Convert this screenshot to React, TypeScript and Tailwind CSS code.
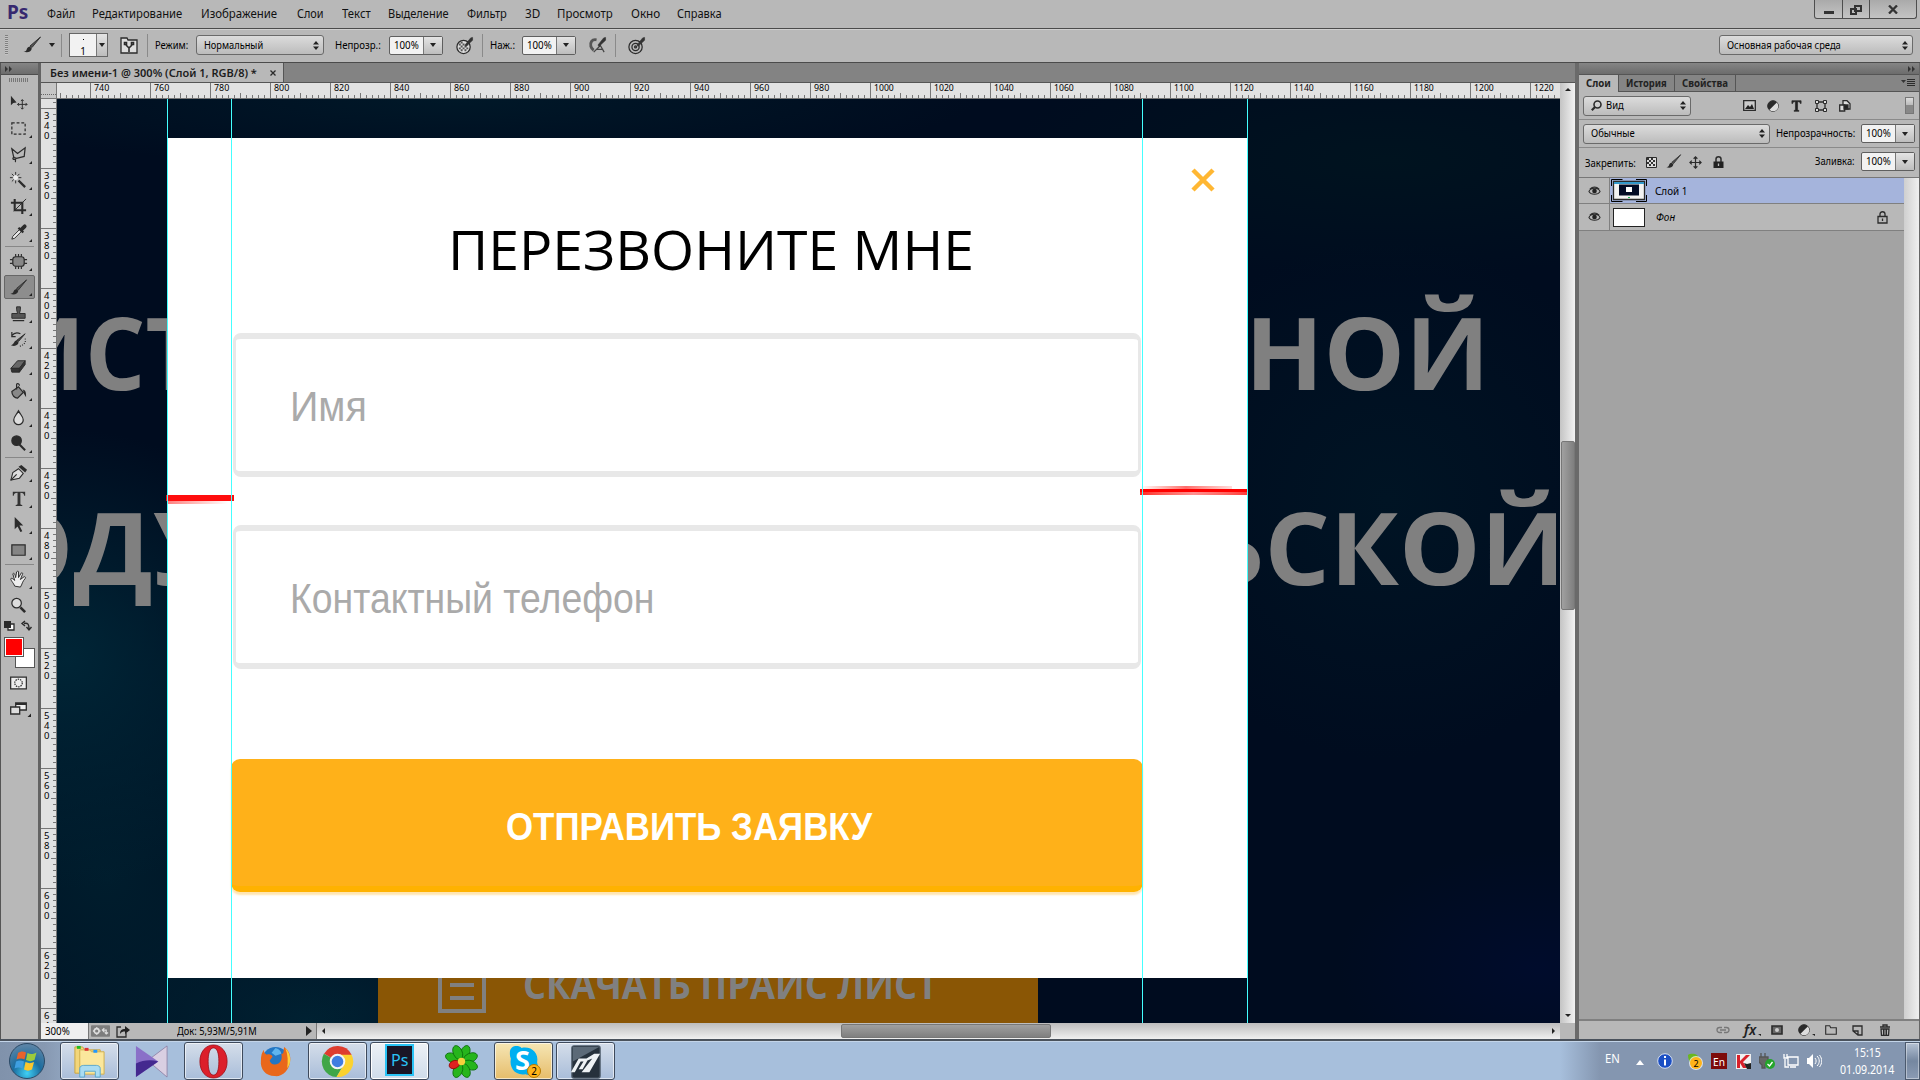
import React, { useLayoutEffect, useRef, useState } from "react";

type FitProps = { w: number; className?: string; children: React.ReactNode };

/** Single line of text squeezed or stretched to an exact width. */
function Fit({ w, className = "", children }: FitProps) {
  const ref = useRef<HTMLSpanElement>(null);
  const [scale, setScale] = useState(1);
  useLayoutEffect(() => {
    const el = ref.current;
    if (el && el.offsetWidth) setScale(w / el.offsetWidth);
  }, [w]);
  return (
    <span className={"block shrink-0 whitespace-nowrap " + className} style={{ width: w }}>
      <span ref={ref} className="inline-block origin-left" style={{ transform: `scaleX(${scale})` }}>
        {children}
      </span>
    </span>
  );
}

type SvgProps = { className?: string; children?: React.ReactNode; box?: string };
function Svg({ className = "size-5", children, box = "0 0 20 20" }: SvgProps) {
  return (
    <svg viewBox={box} className={"shrink-0 " + className} fill="none" stroke="#2b2b2b" strokeWidth="1.3">
      {children}
    </svg>
  );
}

const Updown = () => (
  <Svg box="0 0 6 9" className="w-[6px] h-[9px]">
    <path d="M0 3.5 3 0l3 3.5zM0 5.5 3 9l3-3.5z" fill="#222" stroke="none" />
  </Svg>
);
const Down = () => (
  <Svg box="0 0 6 4" className="w-[6px] h-[4px]">
    <path d="M0 0h6L3 4z" fill="#222" stroke="none" />
  </Svg>
);
const Sep = ({ className = "" }: { className?: string }) => <div className={"w-px h-[23px] shrink-0 bg-[#8a8a8a] " + className} />;

function Percent({ className = "" }: { className?: string }) {
  return (
    <div className={"flex h-[19px] w-[54px] shrink-0 rounded-[2px] border border-[#5f5f5f] bg-[#f2f2f2] " + className}>
      <div className="flex w-[34px] items-center justify-center border-r border-[#777] text-black">
        <Fit w={25} className="text-[10.5px] leading-none">100%</Fit>
      </div>
      <div className="flex flex-1 items-center justify-center bg-gradient-to-b from-[#e4e4e4] to-[#bdbdbd]">
        <Down />
      </div>
    </div>
  );
}

const BrushArt = () => (
  <>
    <path d="M18.5 2 10 12.5 8 11z" fill="#555" strokeWidth=".9" />
    <path d="M8 11.5c-2.500.200-3 2-3.500 3.500-.500 1-1.500 1.500-3 1.500 3 1.500 7.500 1 8.300-3z" fill="#2b2b2b" stroke="none" />
  </>
);
const PenOver = () => <path d="m18.500 1.500-2 .5-6 7.500 1 1.500 7-6.500z" fill="#333" strokeWidth=".6" />;

const menu: [string, number, number][] = [
  ["Файл", 47, 28], ["Редактирование", 17, 90], ["Изображение", 19, 76], ["Слои", 20, 27], ["Текст", 18, 29],
  ["Выделение", 17, 61], ["Фильтр", 18, 40], ["3D", 18, 15], ["Просмотр", 17, 56], ["Окно", 18, 29], ["Справка", 17, 45],
];

function MenuBar() {
  return (
    <header className="flex h-[29px] shrink-0 items-start border-b border-[#4b4b4b] bg-[#b8b8b8]">
      <div className="flex h-[28px] w-0 items-center">
        <Fit w={21} className="ml-[7px] mt-[-4px] text-[19px] leading-none font-bold text-[#36286f]">Ps</Fit>
      </div>
      <nav className="flex h-[28px] items-center text-[12.5px] leading-none text-[#111]">
        {menu.map(([label, gap, w]) => (
          <div key={label} style={{ paddingLeft: gap }}>
            <Fit w={w}>{label}</Fit>
          </div>
        ))}
      </nav>
      <div className="mr-[3px] ml-auto flex h-[19px] w-[103px] rounded-b-[3px] border border-t-0 border-[#4e4e4e] bg-gradient-to-b from-[#aaa] to-[#c4c4c4]">
        <div className="flex w-[28px] items-center justify-center border-r border-[#4e4e4e]">
          <div className="mt-[6px] h-[3px] w-[10px] bg-[#333]" />
        </div>
        <div className="flex w-[27px] items-center justify-center border-r border-[#4e4e4e]">
          <Svg box="0 0 12 10" className="mt-[2px] w-[12px] h-[10px]">
            <path d="M5 1h6v5H5zM1 4h5v5H1z" stroke="#333" strokeWidth="2" />
          </Svg>
        </div>
        <div className="flex flex-1 items-center justify-center">
          <Svg box="0 0 10 9" className="w-[10px] h-[9px]">
            <path d="m1 .5 8 8M9 .5l-8 8" stroke="#333" strokeWidth="2.300" />
          </Svg>
        </div>
      </div>
    </header>
  );
}

function OptionsBar() {
  return (
    <div className="flex h-[34px] shrink-0 items-center border-t border-b border-t-[#d0d0d0] border-b-[#4b4b4b] bg-[#b8b8b8] pb-[2px] text-[10.5px] leading-none text-black">
      <div className="ml-[5px] h-[20px] w-[3px] bg-[repeating-linear-gradient(to_bottom,#808080_0,#808080_1px,#c4c4c4_1px,#c4c4c4_2px)]" />
      <Svg className="ml-[14px] size-[20px]"><BrushArt /></Svg>
      <div className="ml-[7px]"><Down /></div>
      <Sep className="ml-[6px]" />
      <div className="ml-[7px] flex h-[24px] w-[39px] shrink-0 border border-[#666] bg-[#f2f2f2]">
        <div className="flex w-[27px] flex-col items-center border-r border-[#777]">
          <div className="mt-[5px] size-px bg-black" />
          <span className="mt-[6px] text-[10px] leading-none">1</span>
        </div>
        <div className="flex flex-1 items-center justify-center bg-gradient-to-b from-[#e4e4e4] to-[#bdbdbd]"><Down /></div>
      </div>
      <Svg className="ml-[12px] size-[18px]" box="0 0 18 18">
        <path d="M1 2h6l1 2h9v13H1z" fill="#ddd" />
        <path d="M9 16v-4L6 9m3 3 3-3M4.500 6.500h2v2h-2zm7 0h2v2h-2z" strokeWidth="1.600" />
      </Svg>
      <Sep className="ml-[9px]" />
      <Fit w={33} className="ml-[7px]">Режим:</Fit>
      <div className="ml-[8px] flex h-[20px] w-[128px] shrink-0 items-center rounded-[3px] border border-[#6a6a6a] bg-gradient-to-b from-[#dcdcdc] to-[#bcbcbc] pr-[4px] pl-[7px]">
        <Fit w={59}>Нормальный</Fit>
        <div className="ml-auto"><Updown /></div>
      </div>
      <Fit w={46} className="ml-[11px]">Непрозр.:</Fit>
      <Percent className="ml-[8px]" />
      <Svg className="ml-[12px] size-[19px]">
        <circle cx="9" cy="11.500" r="7" fill="#ddd" />
        <path d="M4 8h2v2H4zm4 0h2v2H8zm4 0h2v2h-2zM6 10h2v2H6zm4 0h2v2h-2zm-6 2h2v2H4zm4 0h2v2H8zm4 0h2v2h-2zM6 14h2v2H6zm4 0h2v2h-2zM6 6h2v2H6z" fill="#555" stroke="none" />
        <PenOver />
      </Svg>
      <Sep className="ml-[8px]" />
      <Fit w={25} className="ml-[7px]">Наж.:</Fit>
      <Percent className="ml-[7px]" />
      <Svg className="ml-[12px] size-[19px]">
        <path d="M9 4C4 3 2 7 3 11c.5 2 1.500 3 3 4" strokeWidth="3" stroke="#555" />
        <path d="m6 17 7-7 4 7M9 14h7" stroke="#444" />
        <PenOver />
      </Svg>
      <Sep className="ml-[8px]" />
      <Svg className="ml-[11px] size-[19px]">
        <circle cx="9" cy="11.500" r="7" />
        <circle cx="9" cy="11.500" r="3.800" />
        <circle cx="9" cy="11.500" r="1" />
        <PenOver />
      </Svg>
      <div className="mr-[7px] ml-auto flex h-[20px] w-[194px] items-center rounded-[3px] border border-[#6a6a6a] bg-gradient-to-b from-[#dcdcdc] to-[#bcbcbc] pr-[4px] pl-[7px]">
        <Fit w={114}>Основная рабочая среда</Fit>
        <div className="ml-auto"><Updown /></div>
      </div>
    </div>
  );
}

type Tool = { id: string; corner?: boolean; on?: boolean; art: React.ReactNode };
const groups: Tool[][] = [
  [
    { id: "move", art: <><path d="M2 3v10l2.500-2.500L8 10z" fill="#2b2b2b" stroke="none" /><path d="M14 7v10M9 12h10M12.500 8.500 14 7l1.500 1.500M12.500 15.500 14 17l1.500-1.500M10.500 10.500 9 12l1.500 1.500M17.500 10.500 19 12l-1.500 1.500" strokeWidth="1" /></> },
    { id: "marquee", corner: true, art: <path d="M3 4h14v12H3z" strokeDasharray="3 2" /> },
    { id: "lasso", corner: true, art: <path d="m3 4 6 5 8-6-1 9-8 2-3-1zM6 13c-3 0-2 3 0 2s0 2 1 3" /> },
    { id: "wand", corner: true, art: <><path d="m10 10 7 7" strokeWidth="2.400" /><circle cx="7" cy="7" r="2.500" fill="#eee" stroke="none" /><path d="M7 1v3M7 10v3M1 7h3M10 7h3M3 3l2 2M9 5l2-2M3 11l2-2" strokeWidth="1" /></> },
    { id: "crop", corner: true, art: <><path d="M6 2v12h12M2 6h12v12" strokeWidth="2.200" /><path d="m5 15L18 2" strokeWidth="1" /></> },
    { id: "eyedropper", corner: true, art: <><path d="m3 17 1-3 7-7 2 2-7 7z" fill="#eee" strokeWidth="1" /><path d="M10 5l5 5" strokeWidth="2.500" /><path d="m13 7 3.500-3.500" strokeWidth="4" strokeLinecap="round" /></> },
  ],
  [
    { id: "heal", corner: true, art: <><rect x="4" y="5" width="12" height="10" rx="3" fill="#888" /><path d="M7 2v3m3-3v3m3-3v3M7 15v3m3-3v3m3-3v3M1 8h3m-3 4h3m12-4h3m-3 4h3" strokeWidth="1.200" /></> },
    { id: "brush", corner: true, on: true, art: <BrushArt /> },
    { id: "stamp", corner: true, art: <><path d="M8 3h4v3l-1 4h6v5H3v-5h6L8 6z" fill="#555" strokeWidth="1" /><path d="M4 17.500h12" /></> },
    { id: "history", corner: true, art: <><path d="m17 4-7 8-2-1z" fill="#444" strokeWidth="1" /><path d="M8 11c-3 0-2 4-6 5 4 2 8 0 8-3z" fill="#2b2b2b" stroke="none" /><path d="M3 6c3-4 7-3 9-2M3 2v5h4" /><path d="M17 9c1 4-1 7-6 8" strokeDasharray="1 1.500" /></> },
    { id: "eraser", corner: true, art: <><path d="m2 13 7-8h8l-6 8z" fill="#666" strokeWidth="1" /><path d="M2 13h9v4H3zM11 13l6-8v4l-6 8z" fill="#333" strokeWidth="1" /></> },
    { id: "bucket", corner: true, art: <><path d="m3 10 7-5 5 6-6 6c-3 0-6-3-6-7z" fill="#888" /><path d="M8 8V3c0-2 3-2 3 1" /><path d="M14 8c4 0 4 4 4 8-2-3-3-4-3-7z" fill="#2b2b2b" stroke="none" /></> },
    { id: "blur", corner: true, art: <path d="M10 3c2 4 5 6 5 9.500a5 5 0 0 1-10 0C5 9 8 7 10 3z" fill="#ddd" /> },
    { id: "dodge", corner: true, art: <><circle cx="8" cy="7" r="5" fill="#2b2b2b" /><path d="m11 11 6 6" strokeWidth="2.200" /></> },
  ],
  [
    { id: "pen", corner: true, art: <><path d="m2 18 2-8 6-4 5 5-4 5z" fill="#ddd" strokeWidth="1.100" /><path d="m2 18 6-6" /><path d="m10 4 7 6 2-3-6-5z" fill="#2b2b2b" stroke="none" /></> },
    { id: "type", corner: true, art: <path d="M4 3h13v4h-1c-.500-2-1-3-4-3v12l2 1v1H7v-1l2-1V4C6 4 5.500 5 5 7H4z" fill="#333" stroke="none" /> },
    { id: "select", corner: true, art: <path d="M6 2v13l3-3 3 6 2-1-3-6h4z" fill="#2b2b2b" stroke="none" /> },
    { id: "shape", corner: true, art: <path d="M3 4h14v11H3z" fill="#858585" /> },
  ],
  [
    { id: "hand", corner: true, art: <path d="M6 17c-1-3-5-7-4-8s3 1 4 2L4 4c1-1 2-1 3 4l1-6c1-1 2-1 2 0v6l3-5c1 0 2 0 1 2l-2 5 4-3c1 0 2 1 1 2-3 3-3 6-5 9z" fill="#eee" strokeWidth="1" /> },
    { id: "zoom", art: <><circle cx="8" cy="7.500" r="5" fill="#ddd" /><path d="m12 12 5 5" strokeWidth="2.800" /></> },
  ],
];

function Toolbox() {
  return (
    <aside className="flex w-[41px] shrink-0 flex-col border-r-[3px] border-l border-r-[#636363] border-l-[#555] bg-[#b8b8b8]">
      <div className="flex h-[12px] shrink-0 items-center border-b border-[#4e4e4e] bg-gradient-to-b from-[#858585] to-[#6c6c6c] pl-[4px]">
        <Svg box="0 0 7 6" className="w-[7px] h-[6px]"><path d="M0 0v6l3-3zM4 0v6l3-3z" fill="#333" stroke="none" /></Svg>
      </div>
      <div className="mt-[3px] ml-[8px] h-[4px] w-[20px] shrink-0 bg-[repeating-linear-gradient(to_right,#777_0,#777_1px,#b8b8b8_1px,#b8b8b8_2px)]" />
      <div className="mt-[7px] flex flex-col">
        {groups.map((g, i) => (
          <div key={i} className="flex flex-col">
            {i > 0 && <div className="mx-[4px] my-[1px] h-px bg-[#888]" />}
            {g.map((t) => (
              <div key={t.id} className="flex h-[26px] items-center pl-[3px]">
                <div className={t.on ? "flex h-[24px] w-[31px] items-center rounded-[2px] border border-[#666] bg-[#8d8d8d] pl-[4px]" : "flex h-[24px] w-[31px] items-center pl-[5px]"}>
                  <Svg className="size-[19px]">{t.art}</Svg>
                  {t.corner && (
                    <Svg box="0 0 4 4" className="mb-[2px] ml-[1px] size-[3px] self-end"><path d="M4 0v4H0z" fill="#222" stroke="none" /></Svg>
                  )}
                </div>
              </div>
            ))}
          </div>
        ))}
      </div>
      <Svg box="0 0 31 12" className="mt-[2px] ml-[3px] h-[12px] w-[31px]">
        <path d="M4 4h6v6H4z" fill="#fff" /><path d="M0 1h7v7H0z" fill="#2b2b2b" stroke="none" />
        <path d="M20 3.500c4-1 5 1 5 5M21 1l-3 2.500L21 6M22.500 7l2.500 3 2.500-3" strokeWidth="1.400" />
      </Svg>
      <div className="relative mt-[5px] ml-[3px] h-[31px] w-[31px] shrink-0">
        <div className="absolute right-0 bottom-0 size-[20px] border border-[#555] bg-white" />
        <div className="absolute top-0 left-0 size-[20px] border border-[#555] bg-[#f00] ring-1 ring-white ring-inset" />
      </div>
      <Svg box="0 0 18 14" className="mt-[8px] ml-[9px] h-[14px] w-[17px]">
        <path d="M.7.700h16.600v12.600H.7z" fill="#eee" /><circle cx="9" cy="7" r="4" strokeDasharray="1.500 1" />
      </Svg>
      <Svg box="0 0 22 16" className="mt-[12px] ml-[9px] h-[16px] w-[22px]">
        <path d="M5.700 1h10.600v7H5.700z" fill="#eee" /><path d="M6 2h10" strokeWidth="2" /><path d="M.7 5h9v7H.700z" fill="#ddd" /><path d="M21 11.500V15h-3.500z" fill="#222" stroke="none" />
      </Svg>
    </aside>
  );
}

const range = (n: number) => Array.from({ length: n }, (_, i) => i);

function TopRuler() {
  return (
    <div className="flex h-[16px] shrink-0 border-b border-[#777] bg-[#e2e2e2]">
      <div className="w-[16px] shrink-0 border-r border-[#777] bg-[#c6c6c6]">
        <div className="mt-[11px] border-t border-dotted border-[#666]" />
      </div>
      <div className="flex flex-1 overflow-hidden">
        {range(26).map((i) => (
          <div key={i} className={i ? "relative flex h-[15px] w-[60px] shrink-0 items-end" : "relative -ml-[27px] flex h-[15px] w-[60px] shrink-0 items-end"}>
            {range(10).map((k) => (
              <div key={k} className={k === 0 ? "h-[15px] w-[6px] border-l border-[#777]" : k === 5 ? "h-[5px] w-[6px] border-l border-[#777]" : "h-[3px] w-[6px] border-l border-[#777]"} />
            ))}
            {i > 0 && <Fit w={i >= 14 ? 20 : 15} className="absolute top-0 left-[4px] text-[9.5px] leading-[9px] text-black">{720 + i * 20}</Fit>}
          </div>
        ))}
      </div>
    </div>
  );
}

function SideRuler() {
  return (
    <div className="flex w-[16px] shrink-0 flex-col overflow-hidden border-r border-[#777] bg-[#e2e2e2]">
      {range(17).map((i) => (
        <div key={i} className={i ? "relative flex h-[60px] shrink-0 flex-col items-end" : "relative -mt-[51px] flex h-[60px] shrink-0 flex-col items-end"}>
          {range(10).map((k) => (
            <div key={k} className={k === 0 ? "h-[6px] w-[15px] border-t border-[#777]" : k === 5 ? "h-[6px] w-[5px] border-t border-[#777]" : "h-[6px] w-[3px] border-t border-[#777]"} />
          ))}
          {i > 0 && (
            <div className="absolute top-[3px] left-[3px] w-[6px] text-[9.5px] leading-[10px] text-black">
              {String(320 + i * 20).split("").map((d, k) => <div key={k}>{d}</div>)}
            </div>
          )}
        </div>
      ))}
    </div>
  );
}

const heading = "absolute leading-none font-bold text-[101px] text-[#808080] font-['Open_Sans',sans-serif]";

function Artboard() {
  return (
    <div className="relative h-full flex-1 overflow-hidden bg-[#000c1f] bg-[radial-gradient(ellipse_240px_230px_at_10px_560px,#002536,transparent),radial-gradient(ellipse_300px_300px_at_50px_780px,#001d2d,transparent),radial-gradient(ellipse_380px_120px_at_1330px_60px,#00131f,transparent),radial-gradient(ellipse_260px_260px_at_1330px_400px,#001424,transparent),radial-gradient(ellipse_200px_120px_at_1480px_870px,#000c2c,transparent),radial-gradient(ellipse_300px_160px_at_250px_920px,#002233,transparent),radial-gradient(ellipse_520px_70px_at_400px_0px,#001828,transparent)]">
      <Fit w={247} className={heading + " top-[202px] left-[-50px]"}>ИСТЕ</Fit>
      <Fit w={245} className={heading + " top-[202px] left-[1188px]"}>НОЙ</Fit>
      <Fit w={231} className={heading + " top-[397px] left-[-66px]"}>ОДУ</Fit>
      <Fit w={366} className={heading + " top-[397px] left-[1142px]"}>ЬСКОЙ</Fit>

      <div className="absolute top-[860px] left-[321px] h-[70px] w-[660px] bg-[#8a5605]">
        <div className="absolute top-[-6px] left-[60px] h-[60px] w-[48px] border-[4px] border-[#808080]">
          <div className="mx-[8px] mt-[26px] h-[4px] bg-[#808080]" />
          <div className="mx-[8px] mt-[9px] h-[4px] bg-[#808080]" />
        </div>
        <Fit w={415} className="absolute top-[5px] left-[145px] font-['Open_Sans',sans-serif] text-[39px] leading-none font-bold text-[#808080]">СКАЧАТЬ ПРАЙС ЛИСТ</Fit>
      </div>

      <section className="absolute top-[39px] left-[110px] flex h-[840px] w-[1080px] flex-col bg-white pr-[107px] pl-[66px]">
        <Fit w={526} className="mt-[84px] ml-[215px] font-['Open_Sans',sans-serif] text-[54.500px] leading-[55px] font-medium text-black">ПЕРЕЗВОНИТЕ МНЕ</Fit>
        <div className="mt-[56px] -mr-px flex h-[144px] shrink-0 items-center rounded-[8px] border-x-[3px] border-y-[6px] border-[#e8e8e8] pt-[3px] pl-[54px] font-['Liberation_Sans',sans-serif] text-[42px] leading-none text-[#aaa]">
          <Fit w={77}>Имя</Fit>
        </div>
        <div className="mt-[48px] -mr-px flex h-[144px] shrink-0 items-center rounded-[8px] border-x-[3px] border-y-[6px] border-[#e8e8e8] pt-[3px] pl-[54px] font-['Liberation_Sans',sans-serif] text-[42px] leading-none text-[#aaa]">
          <Fit w={364}>Контактный телефон</Fit>
        </div>
        <button className="mt-[90px] -mr-[3px] -ml-[2px] flex h-[133px] shrink-0 items-center rounded-[9px] border-b-[6px] border-[#ffb200] bg-[#ffb119] pt-[8px] pl-[275px] font-['Liberation_Sans',sans-serif] text-[38px] leading-none font-bold text-white shadow-[0_3px_2px_#ffe5b0]">
          <Fit w={366} className="text-left">ОТПРАВИТЬ ЗАЯВКУ</Fit>
        </button>
        <Svg box="0 0 24 24" className="absolute top-[30px] right-[32px] size-[24px]">
          <path d="m2 2 20 20M22 2 2 22" stroke="#ffb733" strokeWidth="4.500" />
        </Svg>
      </section>

      <div className="absolute top-[396px] left-[109px] h-[6px] w-[68px] bg-[#ff0d0d]" />
      <div className="absolute top-[402px] left-[111px] h-[3px] w-[60px] bg-gradient-to-r from-[#ff7f7f] to-white" />
      <div className="absolute top-[387px] left-[1083px] h-[3px] w-[92px] bg-gradient-to-r from-white via-[#ff6b6b] to-[#ffdcdc]" />
      <div className="absolute top-[390px] left-[1083px] h-[3px] w-[108px] bg-[#f00]" />
      <div className="absolute top-[393px] left-[1083px] h-[3px] w-[107px] bg-gradient-to-r from-[#ff2020] via-[#ff9090] to-[#ff3a3a]" />

      <div className="absolute top-0 left-[110px] h-full w-px bg-[#4ff]" />
      <div className="absolute top-0 left-[174px] h-full w-px bg-[#4ff]" />
      <div className="absolute top-0 left-[1085px] h-full w-px bg-[#4ff]" />
      <div className="absolute top-0 left-[1190px] h-full w-px bg-[#4ff]" />
    </div>
  );
}

function Document() {
  return (
    <main className="flex w-[1534px] shrink-0 flex-col">
      <div className="flex h-[20px] shrink-0 border-b border-[#555] bg-[#838383]">
        <div className="flex w-[243px] items-center border-r border-[#555] bg-[#b8b8b8] pl-[9px] text-[11px] leading-none font-semibold text-[#1c1c1c]">
          <Fit w={207}>Без имени-1 @ 300% (Слой 1, RGB/8) *</Fit>
          <Svg box="0 0 6 6" className="ml-[13px] size-[6px]"><path d="m.5.500 5 5M5.500.500l-5 5" strokeWidth="1.300" /></Svg>
        </div>
      </div>
      <div className="flex min-h-0 flex-1">
        <div className="flex w-[1519px] flex-col">
          <TopRuler />
          <div className="flex min-h-0 flex-1">
            <SideRuler />
            <Artboard />
          </div>
        </div>
        <div className="flex w-[15px] flex-col items-center bg-gradient-to-r from-[#c4c4c4] to-[#f2f2f2] pt-[5px] pb-[6px]">
          <Svg box="0 0 6 3" className="h-[3px] w-[6px]"><path d="M0 3h6L3 0z" fill="#222" stroke="none" /></Svg>
          <div className="mt-[350px] h-[169px] w-[14px] rounded-[2px] border border-[#777] bg-gradient-to-r from-[#a0a0a0] to-[#7f7f7f]" />
          <Svg box="0 0 6 3" className="mt-auto h-[3px] w-[6px]"><path d="M0 0h6L3 3z" fill="#222" stroke="none" /></Svg>
        </div>
      </div>
      <div className="flex h-[16px] shrink-0 bg-[#b8b8b8] text-[10.5px] leading-none text-black">
        <div className="flex w-[48px] items-center border-r border-[#777] bg-[#efefef] pl-[4px]"><Fit w={25}>300%</Fit></div>
        <Svg box="0 0 20 12" className="mt-[2px] ml-[2px] h-[12px] w-[19px]">
          <rect width="20" height="12" rx="1" fill="#7d7d7d" stroke="none" />
          <circle cx="6" cy="6" r="2.500" stroke="#ddd" strokeWidth="1.600" /><path d="M6 2v1.500M6 8.500V10M2 6h1.500M8.500 6H10" stroke="#ddd" strokeWidth="1.600" />
          <path d="m14 3-2 2 2 2m-2-2h4v4m-1.500-1.500L16 9l2-1.500" stroke="#ddd" />
        </Svg>
        <Svg box="0 0 14 14" className="mt-[1px] ml-[6px] size-[14px]">
          <path d="M5 3H1v10h9V9" /><path d="M4 10c0-4 2-5 5-5V2l5 4-5 4V7.500C7 7.500 5 8 4 10z" fill="#222" stroke="none" />
        </Svg>
        <Fit w={80} className="mt-[3px] ml-[47px]">Док: 5,93M/5,91M</Fit>
        <Svg box="0 0 6 10" className="mt-[3px] ml-[49px] h-[10px] w-[6px]"><path d="M0 0v10l6-5z" fill="#222" stroke="none" /></Svg>
        <div className="ml-[4px] flex flex-1 items-center border-l border-[#777] bg-gradient-to-b from-[#bdbdbd] to-[#f0f0f0] px-[5px]">
          <Svg box="0 0 3 6" className="h-[6px] w-[3px]"><path d="M3 0v6L0 3z" fill="#222" stroke="none" /></Svg>
          <div className="ml-[516px] h-[14px] w-[210px] rounded-[2px] border border-[#777] bg-gradient-to-b from-[#a0a0a0] to-[#7f7f7f]" />
          <Svg box="0 0 3 6" className="ml-auto h-[6px] w-[3px]"><path d="M0 0v6l3-3z" fill="#222" stroke="none" /></Svg>
        </div>
        <div className="w-[15px]" />
      </div>
    </main>
  );
}

const Eye = () => (
  <Svg box="0 0 14 10" className="h-[10px] w-[13px]">
    <path d="M1 5.500C3 1 11 1 13 5.500 11 9.500 3 9.500 1 5.500zM2 3C5 0 9 0 12 3" strokeWidth="1.100" /><circle cx="7" cy="5" r="2.500" fill="#222" stroke="none" />
  </Svg>
);
const half = <><circle cx="6" cy="6" r="5.300" fill="#2b2b2b" strokeWidth="1" /><path d="M2.500 9.800 9.800 2.500a5 5 0 0 1-7.300 7.300z" fill="#ddd" stroke="none" /></>;

function Panels() {
  return (
    <aside className="flex flex-1 flex-col border-r border-l-[4px] border-r-[#666] border-l-[#6a6a6a] bg-[#a3a3a3] text-[10.5px] leading-none text-black">
      <div className="flex h-[12px] shrink-0 items-center justify-end border-b border-[#555] bg-gradient-to-b from-[#858585] to-[#6c6c6c] pr-[4px]">
        <Svg box="0 0 7 6" className="w-[7px] h-[6px]"><path d="M0 0v6l3-3zM4 0v6l3-3z" fill="#333" stroke="none" /></Svg>
      </div>
      <div className="flex h-[17px] shrink-0 items-stretch bg-[#858585] font-bold text-[#222]">
        <div className="flex w-[40px] items-center border-r border-[#555] bg-[#b8b8b8] pl-[7px]"><Fit w={25}>Слои</Fit></div>
        <div className="flex w-[56px] items-center border-r border-b border-[#555] pl-[7px]"><Fit w={41}>История</Fit></div>
        <div className="flex w-[61px] items-center border-r border-b border-[#555] pl-[7px]"><Fit w={46}>Свойства</Fit></div>
        <div className="flex flex-1 items-center justify-end border-b border-[#555] pr-[4px]">
          <Svg box="0 0 14 8" className="h-[8px] w-[14px]"><path d="M0 1h5L2.500 4z" fill="#333" stroke="none" /><path d="M6 .5h8M6 2.500h8M6 4.500h8M6 6.500h8" strokeWidth="1" /></Svg>
        </div>
      </div>
      <div className="flex h-[28px] shrink-0 items-center border-b border-[#8a8a8a] bg-[#b8b8b8] pl-[4px]">
        <div className="flex h-[20px] w-[108px] items-center rounded-[3px] border border-[#6a6a6a] bg-gradient-to-b from-[#dcdcdc] to-[#bcbcbc] pr-[4px] pl-[7px]">
          <Svg box="0 0 11 11" className="size-[11px]"><circle cx="6.500" cy="4.500" r="3.500" strokeWidth="1.600" /><path d="M4 7 .8 10.200" strokeWidth="2.200" /></Svg>
          <Fit w={18} className="ml-[4px]">Вид</Fit>
          <div className="ml-auto"><Updown /></div>
        </div>
        <Svg box="0 0 13 11" className="ml-[52px] h-[11px] w-[13px]"><path d="M.7.700h11.600v9.600H.7z" fill="#ccc" /><path d="m2 9 3-4 2 2 2-3 2 5z" fill="#222" stroke="none" /></Svg>
        <Svg box="0 0 12 12" className="ml-[11px] size-[12px]">{half}</Svg>
        <Svg box="3 2 15 17" className="ml-[12px] h-[12px] w-[11px]"><path d="M4 3h13v4h-1c-.500-2-1-3-4-2.500V16l2 1v1H7v-1l2-1V4.500C6 4 5.500 5 5 7H4z" fill="#222" strokeWidth="1" /></Svg>
        <Svg box="0 0 12 12" className="ml-[13px] size-[12px]"><path d="M2 2h8v8H2z" /><path d="M.5.500h3v3h-3zm8 0h3v3h-3zm-8 8h3v3h-3zm8 0h3v3h-3z" fill="#ddd" strokeWidth="1" /></Svg>
        <Svg box="0 0 12 12" className="ml-[12px] size-[12px]"><path d="M4 .700h4l3 3V9H4z" fill="#ddd" /><path d="M.7 5h5v6h-5z" fill="#ddd" /><path d="M5 5h4v4H5z" fill="#222" /></Svg>
        <div className="mr-[5px] ml-auto flex h-[17px] w-[9px] flex-col border border-[#777] bg-[#888]"><div className="h-[7px] bg-gradient-to-b from-[#ddd] to-[#bbb]" /></div>
      </div>
      <div className="flex h-[28px] shrink-0 items-center border-b border-[#8a8a8a] bg-[#b8b8b8] pr-[4px] pl-[4px]">
        <div className="flex h-[20px] w-[187px] items-center rounded-[3px] border border-[#6a6a6a] bg-gradient-to-b from-[#dcdcdc] to-[#bcbcbc] pr-[4px] pl-[7px]">
          <Fit w={44}>Обычные</Fit>
          <div className="ml-auto"><Updown /></div>
        </div>
        <Fit w={79} className="ml-auto">Непрозрачность:</Fit>
        <Percent className="ml-[6px]" />
      </div>
      <div className="flex h-[30px] shrink-0 items-center border-b border-[#777] bg-[#b8b8b8] pr-[4px] pb-[2px] pl-[6px]">
        <Fit w={51} className="mt-[3px]">Закрепить:</Fit>
        <Svg box="0 0 11 11" className="mt-[2px] ml-[10px] size-[11px]"><path d="M.5.500h10v10H.5z" fill="#ddd" strokeWidth="1" /><path d="M1 1h2v2H1zm4 0h2v2H5zM3 3h2v2H3zm4 0h2v2H7zM1 5h2v2H1zm4 0h2v2H5zM3 7h2v2H3zm4 0h2v2H7z" fill="#333" stroke="none" /></Svg>
        <Svg className="ml-[8px] size-[17px]"><BrushArt /></Svg>
        <Svg box="0 0 14 14" className="mt-[2px] ml-[7px] size-[13px]"><path d="M7 1v12M1 7h12M5 3l2-2 2 2M5 11l2 2 2-2M3 5 1 7l2 2M11 5l2 2-2 2" /></Svg>
        <Svg box="0 0 11 13" className="mt-[1px] ml-[11px] h-[13px] w-[11px]"><path d="M3 6V3c0-3 5-3 5 0v3" strokeWidth="1.500" /><path d="M.5 5.500h10V12H.5z" fill="#222" stroke="none" /><path d="M5.500 7.500v2.500" stroke="#bbb" /></Svg>
        <Fit w={40} className="ml-auto">Заливка:</Fit>
        <Percent className="ml-[6px]" />
      </div>
      <div className="flex min-h-0 flex-1">
        <div className="w-[325px]">
          <div className="flex h-[26px] items-center border-b border-[#808080] bg-[#b8b8b8]">
            <div className="flex h-full w-[31px] items-center justify-center border-r border-[#808080]"><Eye /></div>
            <div className="flex h-full flex-1 items-center bg-[#a5b4dc] pl-[1px]">
              <Svg box="0 0 36 23" className="h-[23px] w-[36px]">
                <path d="M2.500 2.500h31v18h-31z" fill="#f2f2f2" /><path d="M3 3h30v2H3z" fill="#39c" stroke="none" /><path d="M8 5.500h20v11H8z" fill="#020b25" stroke="none" /><path d="M15 8h6v5h-6z" fill="#fff" stroke="none" /><path d="M17 18h2v1h-2z" fill="#2b5" stroke="none" />
                <path d="M.5 7V.500h11M25 .500h10.500V7M.5 16v6.500h11M25 22.500h10.500V16" stroke="#000" strokeWidth="1" />
              </Svg>
              <Fit w={32} className="mt-[2px] ml-[8px]">Слой 1</Fit>
            </div>
          </div>
          <div className="flex h-[27px] items-center border-b border-[#808080] bg-[#b8b8b8]">
            <div className="flex h-full w-[31px] items-center justify-center border-r border-[#808080]"><Eye /></div>
            <div className="ml-[3px] h-[19px] w-[32px] border border-[#222] bg-white" />
            <Fit w={19} className="ml-[11px] italic">Фон</Fit>
            <Svg box="0 0 11 13" className="mr-[16px] ml-auto h-[13px] w-[11px]"><path d="M3 5V3c0-3 5-3 5 0v2M1 5.500h9v6.500H1z" /><path d="M5.500 7.500v2.500" /></Svg>
          </div>
        </div>
        <div className="flex-1 bg-gradient-to-r from-[#cfcfcf] to-[#f0f0f0]" />
      </div>
      <div className="flex h-[20px] shrink-0 items-center border-t-[2px] border-[#808080] bg-[#b8b8b8] pl-[137px]">
        <Svg box="0 0 14 8" className="h-[8px] w-[14px]"><path d="M6 1.500H3.500a2.500 2.500 0 0 0 0 5H6M8 1.500h2.500a2.500 2.500 0 0 1 0 5H8M4 4h6" stroke="#777" /></Svg>
        <Fit w={12} className="ml-[14px] text-[14px] font-semibold text-[#222] italic">fx</Fit>
        <div className="mt-[10px] ml-[2px]"><Svg box="0 0 3 2" className="h-[2px] w-[3px]"><path d="M0 0h3v2z" fill="#222" stroke="none" /></Svg></div>
        <Svg box="0 0 12 10" className="ml-[10px] h-[10px] w-[12px]"><path d="M1 1h10v8H1z" fill="#666" strokeWidth="1.600" /><circle cx="6" cy="5" r="2" fill="#ccc" stroke="none" /></Svg>
        <Svg box="0 0 12 12" className="ml-[15px] size-[12px]">{half}</Svg>
        <div className="mt-[10px] ml-[2px]"><Svg box="0 0 3 2" className="h-[2px] w-[3px]"><path d="M0 0h3v2z" fill="#222" stroke="none" /></Svg></div>
        <Svg box="0 0 12 10" className="ml-[10px] h-[10px] w-[12px]"><path d="M.7 9.300V.700h4l1 2h5.600v6.600z" strokeWidth="1.100" /></Svg>
        <Svg box="0 0 11 11" className="ml-[15px] size-[11px]"><path d="M1 1h9v9H6L1 6zM1 6h5v4" /></Svg>
        <Svg box="0 0 12 12" className="ml-[16px] size-[12px]"><path d="M1 3h10M4 2.500V1h4v1.500M2 5h8l-.5 6.300h-7z" /><path d="M4.500 5v6M6 5v6M7.500 5v6" strokeWidth="1" /></Svg>
      </div>
    </aside>
  );
}

const taskItem = "flex h-[38px] w-[59px] shrink-0 items-center justify-center rounded-[3px] mr-[3px]";
const framed = " border border-[#3e4a5c] ring-1 ring-inset ring-white/60 bg-gradient-to-b from-[#d5deea] to-[#a9bdd9]";
const art = "size-[35px]";

function Taskbar() {
  return (
    <footer className="flex h-[39px] shrink-0 items-start border-t border-[#c3d4e8] bg-[linear-gradient(to_right,#8092ab_0,#8799b2_45px,#a7bfdc_110px,#a7bfdc_1560px,#8496b0_1600px,#8496b0_1910px)]">
      <Svg box="0 0 36 36" className="mt-[1px] mr-[15px] ml-[9px] size-[36px]">
        <defs>
          <radialGradient id="orb" cx=".5" cy=".85" r=".8"><stop offset="0" stopColor="#3fd0f5" /><stop offset=".5" stopColor="#1b6d9f" /><stop offset="1" stopColor="#5a83a6" /></radialGradient>
        </defs>
        <circle cx="18" cy="18" r="17.500" fill="url(#orb)" stroke="#2c4a66" strokeWidth="1" />
        <g stroke="none">
          <path d="M9 10c3-2 5-2 8-.5l-1.500 7c-3-1.500-5-1.500-8 0z" fill="#e8622c" /><path d="M18.500 10c3 1.500 5 1.500 9-.5l-2 7.500c-3 1.500-5.500 1.500-8.500 0z" fill="#9ccb3c" />
          <path d="M7 18.500c3-1.500 5-1.500 8 0l-1.500 7c-3-1.500-5-1.500-8 0z" fill="#3f9fe0" /><path d="M16.500 19c3 1.500 5.500 1.500 8.500 0l-2 7.500c-3 1.500-5 1.500-8 0z" fill="#fbc62d" />
        </g>
      </Svg>
      <div className={taskItem + framed}>
        <Svg box="0 0 36 36" className={art}>
          <path d="M3 3h8l2 3h16v24H3z" fill="#f2d67a" stroke="#c9a440" strokeWidth="1" /><path d="M8 6h10l2 2h13v23H8z" fill="#fbe79c" stroke="#cfae4e" strokeWidth="1" />
          <path d="M5 2h4v3H5z" fill="#2b2" stroke="none" /><path d="M13 4h4v3h-4z" fill="#d33" stroke="none" /><path d="M22 6h4v3h-4z" fill="#29f" stroke="none" />
          <path d="M8 34v-9c0-2 2-3 4-3h13c2 0 4 1 4 3v9h-5v-6H13v6z" fill="#a9dcf2" stroke="#5aa7cd" strokeWidth="1" />
        </Svg>
      </div>
      <div className={taskItem}>
        <Svg box="0 0 36 36" className={art}>
          <path d="M34 2 14 17l20 17z" fill="#d9cfe2" stroke="#8a7aa0" strokeWidth=".8" /><path d="M2 2 25 18 2 34z" fill="#8a70c8" stroke="none" /><path d="M2 34V20c8-4 16-4 23-2z" fill="#44298f" stroke="none" />
        </Svg>
      </div>
      <div className={taskItem + framed}>
        <Svg box="0 0 36 36" className={art}>
          <path fillRule="evenodd" d="M18 1c8 0 14 7 14 17s-6 17-14 17S4 28 4 18 10 1 18 1zm0 3c-4 0-5.500 6-5.500 14S14 32 18 32s5.500-6 5.500-14S22 4 18 4z" fill="#dc1f2b" stroke="#9c0d17" strokeWidth=".8" />
        </Svg>
      </div>
      <div className={taskItem}>
        <Svg box="0 0 36 36" className={art}>
          <circle cx="18" cy="17" r="14" fill="#2376c4" stroke="none" /><path d="M18 4c4 1 6 4 6 6l-6 2-4-3z" fill="#5fb4ee" stroke="none" />
          <path d="M6 6c0 3 1 4 3 5 3-1 5 0 6 2l-3 4c1 4 5 5 9 3 3-2 4-5 3-10 3 1 2-4 3-7 5 4 7 9 6 15-1 9-8 16-16 15C8 33 2 26 3 17c0-5 1-8 3-11z" fill="#e9671b" stroke="none" /><path d="M28 4c6 6 7 15 2 21 1-7 1-14-2-21z" fill="#ffcf3a" stroke="none" />
        </Svg>
      </div>
      <div className={taskItem + framed}>
        <Svg box="0 0 36 36" className={art}>
          <path d="M18 18 4.200 10A16 16 0 0 1 32.500 11z" fill="#de3d2f" stroke="none" /><path d="M18 18 4 10a16 16 0 0 0 13 24l7-12z" fill="#3fa648" stroke="none" /><path d="M18 11h14.500a16 16 0 0 1-15.500 23l7-12z" fill="#fbd22f" stroke="none" />
          <circle cx="18" cy="18" r="7" fill="#3f7de0" stroke="#f4f4f4" strokeWidth="2" />
        </Svg>
      </div>
      <div className={taskItem + " border border-[#3e4a5c] ring-1 ring-inset ring-white bg-gradient-to-b from-[#edf1f6] to-[#cfdcea]"}>
        <div className="mb-[3px] flex h-[32px] w-[29px] items-center justify-center border-2 border-[#2ac3f5] bg-[#1a1526]">
          <Fit w={17} className="text-[17px] leading-none text-[#2ac3f5]">Ps</Fit>
        </div>
      </div>
      <div className={taskItem}>
        <Svg box="0 0 36 36" className={art}>
          <g stroke="#0a6b0a" strokeWidth=".8" fill="#27b51c">
            {[22, 67, 112, 157, 202, 292, 337].map((a) => <ellipse key={a} cx="18" cy="8" rx="4.600" ry="7.500" transform={`rotate(${a} 18 18)`} />)}
            <ellipse cx="18" cy="10" rx="4" ry="5.500" fill="#e02020" stroke="#900" transform="rotate(247 18 18)" />
          </g>
          <circle cx="18" cy="18" r="3.800" fill="#f7d03c" stroke="none" />
        </Svg>
      </div>
      <div className={taskItem + " relative border border-[#3e4a5c] ring-1 ring-inset ring-white/60 bg-gradient-to-b from-[#f5e6b4] to-[#e6bd6a]"}>
        <Svg box="0 0 36 36" className={art}>
          <path d="M4 9c0-8 9-8 12-5 10-2 18 5 16 15 3 8-5 15-12 12C10 33 3 25 5 15 4 13 4 11 4 9z" fill="#00aff0" stroke="none" />
        </Svg>
        <span className="absolute top-[2px] left-[20px] font-['Open_Sans',sans-serif] text-[27px] leading-[30px] font-bold text-white">S</span>
        <span className="absolute top-[21px] left-[32px] flex size-[14px] items-center justify-center rounded-full border border-[#b67a00] bg-[#ffb31a] text-[10px] leading-none text-black">2</span>
      </div>
      <div className={taskItem + framed}>
        <Svg box="0 0 36 36" className={art}>
          <rect x="4" y="2" width="29" height="33" rx="2" fill="#26313c" stroke="#4c5a68" /><path d="M5 3h27L5 18z" fill="#5c6a78" stroke="none" /><path d="M3 29 11 15h8l8-5h6L22 29h-8l11-14-5 2-5 9-4 0 5-8h-3L7 29z" fill="#eef2f5" stroke="none" />
        </Svg>
      </div>
      <div className="ml-auto flex h-[38px] items-center text-white">
        <Fit w={15} className="mb-[4px] text-[12px] leading-none">EN</Fit>
        <Svg box="0 0 8 5" className="ml-[16px] mt-[2px] h-[5px] w-[8px]"><path d="M0 5h8L4 0z" fill="#fff" stroke="none" /></Svg>
        <Svg box="0 0 16 16" className="ml-[13px] size-[16px]"><circle cx="8" cy="8" r="7.300" fill="#1b4fc4" stroke="#d5def0" strokeWidth="1" /><path d="M8 3v2M8 6.500v6" stroke="#fff" strokeWidth="2" /></Svg>
        <div className="relative ml-[14px] size-[16px]">
          <Svg box="0 0 16 16" className="size-[16px]"><path d="M1 2c3-2 7-1 9 0l3 4-8 6C2 9 1 5 1 2z" fill="#6bb71f" stroke="none" /></Svg>
          <span className="absolute top-[4px] left-[3px] flex size-[12px] items-center justify-center rounded-full bg-[#ffb31a] text-[9px] leading-none text-black ring-1 ring-white/70">2</span>
        </div>
        <div className="ml-[8px] flex size-[16px] items-center justify-center bg-[#7d0b0b]"><Fit w={12} className="text-[11px] leading-none">En</Fit></div>
        <Svg box="0 0 15 15" className="ml-[9px] size-[15px]"><path d="M0 0h15v15H0z" fill="#f0f0f0" stroke="none" /><path d="M1 1h3v6l6-6h4L7 8l4 6H7l-3-5v5H1z" fill="#d8202a" stroke="none" /><path d="m8 9 3 1 4-1v6h-4z" fill="#222" stroke="none" /></Svg>
        <Svg box="0 0 16 16" className="ml-[8px] size-[16px]"><path d="M2 0v4M6 0v4M0 4h9v5l-3 3v3H3v-3L0 9z" fill="#666" stroke="#555" /><circle cx="11" cy="11" r="5" fill="#24a52b" stroke="none" /><path d="m8.500 11 2 2 3-4" stroke="#fff" /></Svg>
        <Svg box="0 0 16 16" className="ml-[8px] size-[16px]"><path d="M5 4h10v8H5zM7 14h6M2 6v8h4M1 1v4h3V1" stroke="#fff" /></Svg>
        <Svg box="0 0 16 16" className="ml-[7px] size-[16px]"><path d="M1 5h2l4-4v14l-4-4H1z" fill="#fff" stroke="none" /><path d="M9 5c1.500 2 1.500 4 0 6M11 3c3 3 3 7 0 10M13.500 2c3 4 3 8 0 12" stroke="#fff" strokeWidth="1" /></Svg>
        <div className="ml-[18px] flex flex-col items-center gap-[5px] text-[12px] leading-[12px]">
          <Fit w={27}>15:15</Fit>
          <Fit w={54}>01.09.2014</Fit>
        </div>
        <div className="ml-[11px] h-[38px] w-[15px] border border-[#4b596d] bg-gradient-to-b from-[#b5c2d4] via-[#7587a0] to-[#8b9bb4] ring-1 ring-white/40 ring-inset" />
      </div>
    </footer>
  );
}

export default function App() {
  return (
    <div className="flex h-[1080px] w-[1920px] flex-col overflow-hidden bg-[#b8b8b8] font-['Noto_Sans','Open_Sans',sans-serif]">
      <MenuBar />
      <OptionsBar />
      <div className="flex min-h-0 flex-1 border-b-2 border-[#4a525c]">
        <Toolbox />
        <Document />
        <Panels />
      </div>
      <Taskbar />
    </div>
  );
}
